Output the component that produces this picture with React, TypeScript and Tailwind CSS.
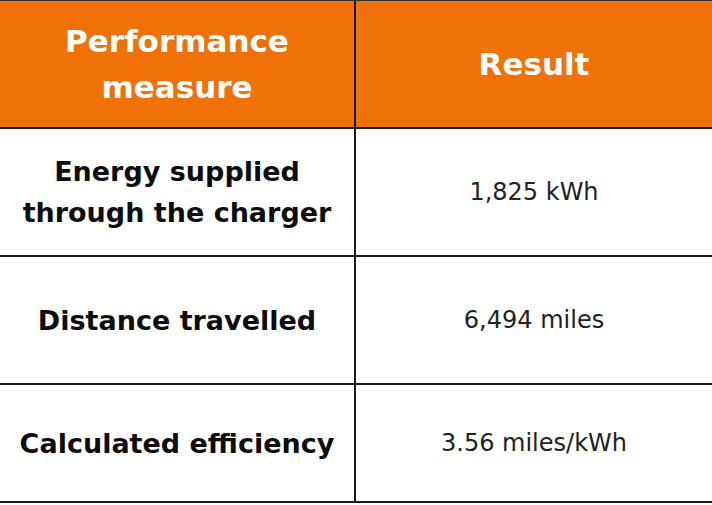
const rows = [
  { measure: ['Energy supplied', 'through the charger'], result: '1,825 kWh', h: 'h-[128px]' },
  { measure: ['Distance travelled'], result: '6,494 miles', h: 'h-[128px]' },
  { measure: ['Calculated efficiency'], result: '3.56 miles/kWh', h: 'h-[118px]' },
]

export default function App() {
  return (
    <div className="w-[712px] h-[505px] bg-white font-['DejaVu_Sans',sans-serif] text-[#0d0d0d]">
      <div className="border-t border-[#333]">
        <div className="flex h-[128px] bg-[#f07108] text-white font-bold text-[31px] leading-[46px] border-b-2 border-[#1a1a1a]">
          <div className="w-[356px] shrink-0 border-r-2 border-[#1a1a1a] flex flex-col items-center justify-center text-center">
            <span>Performance</span>
            <span>measure</span>
          </div>
          <div className="flex-1 flex items-center justify-center">Result</div>
        </div>

        {rows.map(row => (
          <div key={row.result} className={`flex ${row.h} border-b-2 border-[#1a1a1a]`}>
            <div className="w-[356px] shrink-0 border-r-2 border-[#1a1a1a] flex flex-col items-center justify-center text-center font-bold text-[27px] leading-[41px]">
              {row.measure.map(line => (
                <span key={line}>{line}</span>
              ))}
            </div>
            <div className="flex-1 flex items-center justify-center text-[24px] text-[#222]">{row.result}</div>
          </div>
        ))}
      </div>
    </div>
  )
}
